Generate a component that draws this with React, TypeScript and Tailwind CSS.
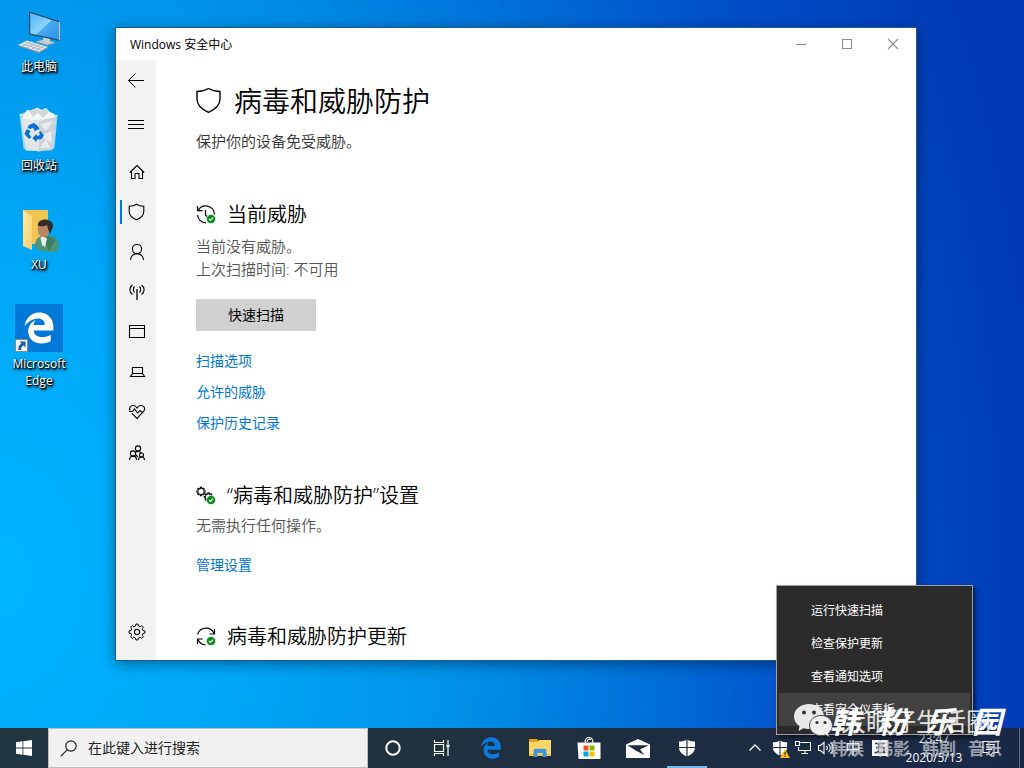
import React from 'react';

type IconProps = { className?: string };

const EDGE_PATH =
  'M26 228c42-61 117-121 220-125 0 0 110 0 100 105H170c6-37 19-59 34-79-75 35-122 96-121 188 1 72 50 145 121 172 84 32 193 8 240-21V363C364 420 174 424 172 296H486V244c0-44-8-85-29-123C416 48 344 8 259 8 119 8 41 113 26 228z';

function EdgeGlyph({ className }: IconProps) {
  return (
    <svg viewBox="0 0 512 512" className={className} fill="currentColor" aria-hidden="true">
      <path d={EDGE_PATH} />
    </svg>
  );
}

function Line({ className, size = 18, children }: { className?: string; size?: number; children: React.ReactNode }) {
  return (
    <svg
      width={size}
      height={size}
      viewBox={`0 0 ${size} ${size}`}
      className={className}
      fill="none"
      stroke="currentColor"
      strokeWidth="1.1"
      aria-hidden="true"
    >
      {children}
    </svg>
  );
}

function gearPath(cx: number, cy: number, outer: number, inner: number, teeth: number) {
  const pts: string[] = [];
  const step = (Math.PI * 2) / teeth;
  for (let i = 0; i < teeth; i++) {
    const a = i * step - Math.PI / 2;
    [
      [-0.3, inner],
      [-0.18, outer],
      [0.18, outer],
      [0.3, inner],
    ].forEach(([k, r]) => {
      pts.push(`${(cx + Math.cos(a + k * step) * r).toFixed(2)} ${(cy + Math.sin(a + k * step) * r).toFixed(2)}`);
    });
  }
  return `M${pts.join('L')}Z`;
}

const shieldPath = 'M8.5 1.2C10.500 2.6 13 3.200 15.800 3.200V8.500C15.800 12.300 12.800 15 8.500 16.800C4.200 15 1.200 12.300 1.200 8.500V3.200C4 3.200 6.500 2.600 8.500 1.200Z';

function PcIcon() {
  return (
    <svg width="48" height="48" viewBox="0 0 48 48" aria-hidden="true">
      <defs>
        <linearGradient id="pcScreen" x1="0" y1="0" x2="1" y2="1">
          <stop offset="0" stopColor="#4fb6f7" />
          <stop offset="0.5" stopColor="#8ed2fb" />
          <stop offset="0.52" stopColor="#49abf2" />
          <stop offset="1" stopColor="#2b92e6" />
        </linearGradient>
      </defs>
      <path d="M14 4.500 45 14.500V34L14 27.500Z" fill="#27465f" />
      <path d="M15.200 6 43.700 15.200V32.500L15.200 26.500Z" fill="url(#pcScreen)" />
      <path d="M43.700 15.200 45 14.500V34L43.700 32.500Z" fill="#b9c6cf" />
      <path d="M28 30.500 35 32V34L40 35.500 32 38 21 34.500 28 33Z" fill="#c5cdd3" />
      <path d="M21 34.500 32 38 40 35.500V36.500L32 39 21 35.500Z" fill="#87939c" />
      <path d="M12 33.500 33 40 24 45 3 38Z" fill="#e4e8eb" />
      <path d="M3 38 24 45 33 40V41L24 46.200 3 39Z" fill="#8b969e" />
      <path d="M9.500 35 30 41.500M6.500 36.500 27 43.300M16 35 7 39.500M20.500 36.300 11.500 41M25 37.700 16 42.500M29 39 20.500 43.800" stroke="#a3adb5" strokeWidth=".8" />
    </svg>
  );
}

function BinIcon() {
  return (
    <svg width="48" height="48" viewBox="0 0 48 48" aria-hidden="true">
      <path d="M4.500 8.500 13 5 34 6 42.500 9.500 39.500 42 36 44.500 11.500 45 8.500 42Z" fill="#bfe0f2" opacity=".85" />
      <path d="M8 10 12 4 18 5 22 1.500 27 4 31 2 35 6 39 8 40 14 8 14Z" fill="#f4f5f6" />
      <path d="M14 5 18 11 23 7 28 12 34 6 30 2 26 5 21 2Z" fill="#d3d8dc" />
      <path d="M6 12 11 43 24 45.500 37.500 42.500 41 12 24 15Z" fill="#e3e6e9" />
      <path d="M24 14 41 11 37.500 42.500 24 45.500Z" fill="#ccd2d7" />
      <path d="M25 18 38 15 31 25ZM26 30 36 25 37 37ZM25 42 31 33 35 42Z" fill="#e9ebed" />
      <path d="M4.500 8.500 24 14.500 42.500 9.500" fill="none" stroke="#e8f5fb" strokeWidth="1" />
      <g fill="#0a6fd0">
        <path d="M14 19 19 17 23 20 24.500 23 19.500 25 18 21.500 15.500 23 12.500 22Z" />
        <path d="M11.500 23 15.500 25 14 28 16.500 31 14 33 9.500 28Z" />
        <path d="M25.500 25 29 29.500 26.500 33 22 33.500 21 36 17.500 32 21.500 28 22 30 25 29 24 26Z" />
      </g>
    </svg>
  );
}

function UserFolderIcon() {
  return (
    <svg width="48" height="48" viewBox="0 0 48 48" aria-hidden="true">
      <defs>
        <linearGradient id="folderFront" x1="0" y1="0" x2="1" y2="1">
          <stop offset="0" stopColor="#ffe9a6" />
          <stop offset="1" stopColor="#f5cf6e" />
        </linearGradient>
      </defs>
      <path d="M8 5H33V39H16Z" fill="#f0c555" />
      <path d="M8 5 17 12V45L8 41Z" fill="url(#folderFront)" />
      <path d="M20 43C19.500 35 23 32 27 30.500L34 30C42 33 46 36 42.500 46 L42.500 46C35 48 25 46.500 20 43Z" fill="#4c9472" />
      <path d="M25.500 33 27 30 32 34 30 42 27 40Z" fill="#e4efe9" />
      <path d="M33 31 40 35 34 46 31 38Z" fill="#3c7d5f" />
      <ellipse cx="28.500" cy="24.500" rx="5.800" ry="7.800" fill="#b98662" />
      <path d="M23 21C22 16 27 14.500 31 14.500 37 15 39.500 20 37 24L35 29 33 24 32 20C29 22 26 21 23 21Z" fill="#352b27" />
    </svg>
  );
}

function EdgeTile() {
  return (
    <span className="relative flex size-12 items-center justify-center bg-[#0078d7]">
      <EdgeGlyph className="size-8 text-white" />
      <svg width="13" height="13" viewBox="0 0 13 13" className="absolute bottom-0 left-0" aria-hidden="true">
        <rect x=".5" y=".5" width="12" height="12" fill="#f4f4f4" stroke="#8a8a8a" />
        <path d="M4.500 2.500H10.500V8.500L8.500 6.500C6.500 7.500 5.800 9 6 11H3.500C2.800 8 4 6 6.500 4.500Z" fill="#1c5fa8" />
      </svg>
    </span>
  );
}

function DesktopItem({ label, children }: { label: string; children: React.ReactNode }) {
  return (
    <button className="flex h-[99px] w-full flex-col items-center gap-[3px] text-xs leading-[17px] text-white [text-shadow:1px_1px_1px_#000,1px_1px_2px_#000,1px_2px_3px_#000]">
      <span className="block size-12">{children}</span>
      <span className="max-w-16">{label}</span>
    </button>
  );
}

function OkBadge({ x, y }: { x: number; y: number }) {
  return (
    <g>
      <circle cx={x} cy={y} r="4.600" fill="#0d8a1c" stroke="#fff" strokeWidth=".6" />
      <path d={`M${x - 2} ${y}l1.500 1.500 2.600-2.800`} fill="none" stroke="#fff" strokeWidth="1.200" />
    </g>
  );
}

function Section({ icon, title, children }: { icon: React.ReactNode; title: string; children?: React.ReactNode }) {
  return (
    <section>
      <h2 className="flex h-[30px] items-center gap-[11px] text-xl font-[350]">
        {icon}
        {title}
      </h2>
      {children}
    </section>
  );
}

function TextLink({ children }: { children: React.ReactNode }) {
  return (
    <a href="#" className="flex h-[31px] w-fit items-center text-sm text-[#0078d7]">
      {children}
    </a>
  );
}

const navItems: { label: string; icon: React.ReactNode }[] = [
  { label: '主页', icon: <Line><path d="M1.800 9.500 9 2.500 16.200 9.500M3.500 8V15.500H7V10.500H11V15.500H14.500V8" /></Line> },
  { label: '病毒和威胁防护', icon: <Line><path d={shieldPath} /></Line> },
  { label: '帐户保护', icon: <Line><circle cx="9" cy="6" r="4.600" /><path d="M2.500 17C2.500 13 5.500 10.600 9 10.600S15.500 13 15.500 17" /></Line> },
  { label: '防火墙和网络保护', icon: <Line><path d="M9 6V17" strokeWidth="1.300" /><path d="M6.500 3.500C5 5 5 8 6.500 9.500M11.500 3.500C13 5 13 8 11.500 9.500M4.500 2C1 4.500 1 9 4.500 11.500M13.500 2C17 4.500 17 9 13.500 11.500" /></Line> },
  { label: '应用和浏览器控制', icon: <Line><path d="M1.500 2.500H16.500V14.500H1.500ZM1.500 5.500H16.500" /></Line> },
  { label: '设备安全性', icon: <Line><path d="M4.500 4.500H14.500V10.500H4.500ZM4.500 10.500 2.500 13.500H16.500L14.500 10.500" /></Line> },
  { label: '设备性能和运行状况', icon: <Line><path d="M2 7.500C.5 4.500 3 2.300 5.500 2.500 7 2.600 8 3.500 9 5 10 3.500 11 2.600 12.500 2.500 15.500 2.300 17.800 4.800 16 7.800L9 15.500 4 10.300M1 8.500H4.500L6.500 6 9.500 10 11.800 7.500 13.500 9H14.500" /></Line> },
  { label: '家庭选项', icon: <Line><circle cx="10" cy="5.500" r="2.600" /><circle cx="5" cy="10.500" r="2.600" /><circle cx="13.500" cy="12" r="2" /><path d="M1.500 17C1.500 14.500 3 13.100 5 13.100S8.500 14.500 8.500 17M10.500 17C10.500 15 12 14 13.500 14S16.500 15 16.500 17M7.500 9.500C8.500 8 12 8 13.500 10M7.500 11.500 10 14" /></Line> },
];

const menuItems = ['运行快速扫描', '检查保护更新', '查看通知选项', '查看安全仪表板'];

function SecurityWindow() {
  return (
    <main className="absolute top-7 right-[108px] bottom-[68px] left-[116px] flex flex-col bg-white shadow-[0_3px_14px_rgba(0,0,0,0.45)] outline-1 outline-[#1b5a96]">
      <header className="flex h-8 shrink-0 items-center justify-between pl-[14px]">
        <span className="pt-0.5 text-xs">Windows 安全中心</span>
        <div className="flex text-[#8a8a8a]">
          <button aria-label="最小化" className="flex h-8 w-[46px] items-center justify-center">
            <Line size={12}><path d="M1 6.500H11" /></Line>
          </button>
          <button aria-label="最大化" className="flex h-8 w-[46px] items-center justify-center">
            <Line size={12}><path d="M1.500 1.500H10.500V10.500H1.500Z" /></Line>
          </button>
          <button aria-label="关闭" className="flex h-8 w-[46px] items-center justify-center">
            <Line size={12}><path d="M1 1 11 11M11 1 1 11" /></Line>
          </button>
        </div>
      </header>
      <div className="flex min-h-0 flex-1">
        <nav className="flex w-10 shrink-0 flex-col bg-[#f2f2f2]">
          <button aria-label="返回" className="flex h-10 items-center justify-center">
            <Line><path d="M17 9.500H1.500M8.500 2.500 1.500 9.500 8.500 16.500" strokeWidth="1" /></Line>
          </button>
          <button aria-label="打开导航" className="mt-[5px] flex h-10 items-center justify-center">
            <Line><path d="M1 4.500H17M1 8.500H17M1 12.500H17" /></Line>
          </button>
          <div className="mt-[7px] flex flex-col">
            {navItems.map((item, i) => (
              <button key={item.label} aria-label={item.label} className="flex h-10 items-center pl-1">
                <span className={i === 1 ? 'h-6 w-0.5 bg-[#0078d7]' : 'h-6 w-0.5'} />
                <span className="ml-1.5">{item.icon}</span>
              </button>
            ))}
          </div>
          <button aria-label="设置" className="mt-auto mb-2 flex h-10 items-center pl-3">
            <Line><path d={gearPath(9, 9, 8, 6.2, 8)} strokeWidth="1" /><circle cx="9" cy="9" r="2.600" /></Line>
          </button>
        </nav>
        <div className="min-w-0 flex-1 overflow-hidden pt-[21px] pl-10">
          <h1 className="flex h-10 items-center gap-[13px] text-[28px] font-[350]">
            <svg width="25" height="28" viewBox="0 0 25 28" fill="none" stroke="currentColor" strokeWidth="1.400" aria-hidden="true">
              <path d="M12.500 1.500C16 3.600 19.500 4.500 24 4.500V12C24 18.500 19 22.500 12.500 25.300C6 22.500 1 18.500 1 12V4.500C5.500 4.500 9 3.600 12.500 1.500Z" />
            </svg>
            病毒和威胁防护
          </h1>
          <p className="mt-2 text-[15px] leading-6 font-[350] text-[#333]">保护你的设备免受威胁。</p>

          <div className="mt-[47px]">
            <Section
              title="当前威胁"
              icon={
                <Line size={20}>
                  <path d="M2 5.500C4 2 8 .500 11.500 1.100 16 2 18.500 5.500 18.300 9.500M1.500 1V5.700H6.500M1.500 10C2 14.500 5.500 17.500 10 17.800" strokeWidth="1.200" />
                  <path d="M9.500 5V10L12 12.500" strokeWidth="1.200" />
                  <OkBadge x={15} y={14} />
                </Line>
              }
            >
              <p className="mt-[5px] text-[15px] leading-[23px] font-[350] text-[#555]">
                当前没有威胁。
                <br />
                上次扫描时间: 不可用
              </p>
              <button className="mt-[18px] h-8 w-[120px] bg-[#d1d1d1] text-sm">快速扫描</button>
              <div className="mt-[14px]">
                <TextLink>扫描选项</TextLink>
                <TextLink>允许的威胁</TextLink>
                <TextLink>保护历史记录</TextLink>
              </div>
            </Section>
          </div>

          <div className="mt-[43px]">
            <Section
              title="“病毒和威胁防护”设置"
              icon={
                <Line size={20}>
                  <path d={gearPath(5, 5.5, 4.2, 3, 8)} />
                  <path d={gearPath(12.5, 11, 4.2, 3, 8)} />
                  <OkBadge x={15} y={14} />
                </Line>
              }
            >
              <p className="mt-[3px] text-[15px] leading-[23px] font-[350] text-[#555]">无需执行任何操作。</p>
              <div className="mt-3">
                <TextLink>管理设置</TextLink>
              </div>
            </Section>
          </div>

          <div className="mt-[42px]">
            <Section
              title="病毒和威胁防护更新"
              icon={
                <Line size={20}>
                  <path d="M1.500 7.500C3 3 6.500 1.100 10 1.100 13.500 1.100 16.500 3 18 6.500M18.500 2V7H13.500M9.500 17.800C6 17.800 3.500 16 2 12.500M1.500 17V12H6.500" strokeWidth="1.200" />
                  <OkBadge x={15} y={14} />
                </Line>
              }
            />
          </div>
        </div>
      </div>
    </main>
  );
}

function TaskButton({ label, active, children }: { label: string; active?: boolean; children: React.ReactNode }) {
  return (
    <button aria-label={label} className="flex h-10 w-[49px] flex-col items-center">
      <span className="flex flex-1 items-center">{children}</span>
      <span className={active ? '-mt-0.5 h-0.5 w-10 bg-[#76b9ed]' : 'hidden'} />
    </button>
  );
}

function WinShield({ size }: { size: number }) {
  return (
    <svg width={size} height={size} viewBox="0 0 18 18" aria-hidden="true">
      <path d="M9 .5C11.500 2 14 2.600 17 2.600V8.500C17 12.800 13.500 15.800 9 17.500 4.500 15.800 1 12.800 1 8.500V2.600C4 2.600 6.500 2 9 .5Z" fill="#fff" />
      <path d="M9 0V18M1 8.500H17" stroke="#1f2e3d" strokeWidth="1.200" />
    </svg>
  );
}

function Taskbar() {
  return (
    <footer className="flex h-10 shrink-0 items-stretch bg-linear-to-r from-[#213640] via-[#1f2f3f] to-[#1a2848] text-white">
      <button aria-label="开始" className="flex w-12 items-center justify-center">
        <svg width="16" height="16" viewBox="0 0 16 16" fill="#fff" aria-hidden="true">
          <path d="M0 2.200 6.500 1.300V7.600H0ZM7.300 1.200 16 0V7.600H7.300ZM0 8.400H6.500V14.700L0 13.800ZM7.300 8.400H16V16L7.300 14.800Z" />
        </svg>
      </button>
      <label className="flex w-80 items-center gap-[11px] border border-[#bdbdbd] bg-[#f1f1f1] pl-[11px] text-[#222]">
        <svg width="17" height="17" viewBox="0 0 17 17" fill="none" stroke="currentColor" strokeWidth="1.200" aria-hidden="true">
          <circle cx="11" cy="6" r="5.200" />
          <path d="M7.200 9.800.6 16.400" />
        </svg>
        <input aria-label="搜索" placeholder="在此键入进行搜索" className="min-w-0 flex-1 bg-transparent text-sm outline-none placeholder:text-[#222]" />
      </label>
      <TaskButton label="Cortana">
        <svg width="16" height="16" viewBox="0 0 16 16" aria-hidden="true"><circle cx="8" cy="8" r="6.700" fill="none" stroke="#fff" strokeWidth="2" /></svg>
      </TaskButton>
      <TaskButton label="任务视图">
        <svg width="18" height="16" viewBox="0 0 18 16" fill="none" stroke="#fff" strokeWidth="1.200" aria-hidden="true">
          <path d="M1.500 4.500H10.500V11.500H1.500ZM1.500 0V2.500H10.500V0M1.500 16V13.500H10.500V16M15 0V4M15 8V16" />
          <path d="M13.500 4.500H16.500V7.500H13.500Z" fill="#fff" stroke="none" />
        </svg>
      </TaskButton>
      <TaskButton label="Microsoft Edge">
        <EdgeGlyph className="size-[22px] text-[#0a7ade]" />
      </TaskButton>
      <TaskButton label="文件资源管理器">
        <svg width="22" height="18" viewBox="0 0 22 18" aria-hidden="true">
          <path d="M0 0H8L10 2V5H0Z" fill="#e3a31b" />
          <path d="M0 3H8.500L10.500 1H22V17H0Z" fill="#fcd667" />
          <path d="M0 15H22V17H0Z" fill="#f4c13e" />
          <path d="M4.500 18V12C4.500 10.500 5.500 9.800 6.500 9.800H15.500C17 9.800 17.500 10.500 17.500 12V18H13.500V14H8.500V18Z" fill="#3f97dd" />
        </svg>
      </TaskButton>
      <TaskButton label="Microsoft Store">
        <svg width="24" height="24" viewBox="0 0 24 24" aria-hidden="true">
          <path d="M8 7C8 3 9.500 1.500 12 1.500S16 3 16 7M10 6C10 3.500 12 2.500 14 3.500" fill="none" stroke="#fff" strokeWidth="1.100" />
          <path d="M.5 6.500H23.500V23H1.500Z" fill="#fff" />
          <path d="M6.500 9.500H11.500V14.500H6.500Z" fill="#f25022" />
          <path d="M12.500 9.500H17.500V14.500H12.500Z" fill="#7fba00" />
          <path d="M6.500 15.500H11.500V20.500H6.500Z" fill="#00a4ef" />
          <path d="M12.500 15.500H17.500V20.500H12.500Z" fill="#ffb900" />
        </svg>
      </TaskButton>
      <TaskButton label="邮件">
        <svg width="24" height="19" viewBox="0 0 24 19" aria-hidden="true">
          <path d="M0 5.500 12 0 24 5.500V19H0Z" fill="#fff" />
          <path d="M1.500 6.200H22.500L14 10.500 18.500 16 10.500 12Z" fill="#1f2e3d" />
        </svg>
      </TaskButton>
      <TaskButton label="Windows 安全中心" active>
        <WinShield size={18} />
      </TaskButton>
      <div className="ml-auto flex items-center text-xs">
        <button aria-label="显示隐藏的图标" className="mr-[7px] flex w-5 justify-center">
          <Line size={12}><path d="M.5 8.500 6 3 11.500 8.500" stroke="#fff" strokeWidth="1.300" /></Line>
        </button>
        <button aria-label="安全警告" className="relative mr-[7px]">
          <WinShield size={16} />
          <svg width="10" height="9" viewBox="0 0 10 9" className="absolute -right-0.5 -bottom-0.5" aria-hidden="true">
            <path d="M5 0 10 9H0Z" fill="#fdb813" />
            <path d="M5 3V6M5 7V8" stroke="#222" />
          </svg>
        </button>
        <button aria-label="网络" className="mr-[7px]">
          <svg width="16" height="14" viewBox="0 0 16 14" fill="none" stroke="#fff" strokeWidth="1.100" aria-hidden="true">
            <path d="M5.500 1.500H15.500V9.500H3.500V6M10 9.500V13M6.500 12.500H13M.5.5H4.500V4.500H.5Z" />
          </svg>
        </button>
        <button aria-label="音量" className="mr-[11px]">
          <svg width="16" height="14" viewBox="0 0 16 14" fill="none" stroke="#fff" strokeWidth="1.100" aria-hidden="true">
            <path d="M.5 4.500H2.500L6 1.500V12.500L2.500 9.500H.5ZM8.500 5C9.500 6 9.500 8 8.500 9M10.500 3C12.800 5 12.800 9 10.500 11M12.500 1.500C16 4 16 10 12.500 12.500" />
          </svg>
        </button>
        <button className="mr-[11px] w-4 text-base leading-4">中</button>
        <button aria-label="微软拼音" className="mr-4">
          <svg width="16" height="16" viewBox="0 0 16 16" aria-hidden="true">
            <path d="M0 0H16V16H0Z" fill="#fff" />
            <path d="M3 3.500H13M4 7.500H12V12.500M7 3.500 6 12.500M2.500 12.500H13.500" fill="none" stroke="#1b2a3a" strokeWidth="1.400" />
          </svg>
        </button>
        <time className="mr-[18px] flex w-[60px] flex-col items-center leading-[19px]">
          <span>23:47</span>
          <span>2020/5/13</span>
        </time>
        <button aria-label="通知" className="mr-5">
          <Line size={17}><path d="M1 1.500H16V12.500H11L8.500 15.500 6 12.500H1ZM4 4.500H13M4 7H13M4 9.500H10" stroke="#fff" /></Line>
        </button>
        <button aria-label="显示桌面" className="h-10 w-[5px] border-l border-[#66717f]" />
      </div>
    </footer>
  );
}

function ContextMenu() {
  return (
    <ul role="menu" className="absolute right-[51px] bottom-[33px] w-[197px] border border-[#a0a0a0] bg-[#2b2b2b] px-0.5 py-2 text-xs text-white shadow-[3px_3px_4px_rgba(0,0,0,0.5)]">
      {menuItems.map((item, i) => (
        <li key={item} role="none">
          <button role="menuitem" className={i === 3 ? 'h-[33px] w-full bg-[#414141] pl-8 text-left' : 'h-[33px] w-full pl-8 text-left'}>
            {item}
          </button>
        </li>
      ))}
    </ul>
  );
}

function Watermark() {
  return (
    <>
      <div className="pointer-events-none absolute right-[33px] bottom-[30px] flex items-center gap-2 whitespace-nowrap text-white/85">
        <svg width="39" height="34" viewBox="0 0 39 34" aria-hidden="true">
          <path d="M15 0C23 0 30 5 30 12.500S23 25 15 25C13 25 11 24.700 9.500 24.200L4.500 27 5.500 22C2 19.800 0 16.500 0 12.500 0 5 7 0 15 0Z" fill="#e8e8e8" />
          <circle cx="10" cy="8.500" r="2" fill="#333" />
          <circle cx="20" cy="8.500" r="2" fill="#333" />
          <path d="M27 11.500C33.500 11.500 38.500 16 38.500 21.500 38.500 24.500 37 27 34.500 29L35.500 33 31.500 31C30 31.400 28.500 31.600 27 31.600 20.500 31.600 15.500 27 15.500 21.500S20.500 11.500 27 11.500Z" fill="#f0f0f0" stroke="#444" />
          <circle cx="23" cy="18.500" r="1.600" fill="#333" />
          <circle cx="31" cy="18.500" r="1.600" fill="#333" />
        </svg>
        <span className="text-[25px] leading-8">大眼仔生活圈</span>
      </div>
      <div className="pointer-events-none absolute right-[22px] bottom-[10px] flex w-[172px] flex-col whitespace-nowrap">
        <div className="flex justify-between text-[30px] leading-9 font-bold text-white italic">
          <span>韩</span>
          <span>粉</span>
          <span>乐</span>
          <span>园</span>
        </div>
        <div className="flex justify-between text-[17px] leading-[18px] font-bold text-[#c4c8cc]/75">
          <span>韩娱</span>
          <span>韩影</span>
          <span>韩剧</span>
          <span>音乐</span>
        </div>
      </div>
    </>
  );
}

export default function App() {
  return (
    <div className="relative flex min-h-screen flex-col overflow-hidden bg-[radial-gradient(ellipse_108%_200%_at_0%_75%,#00b4ff_0%,#00a8f8_20%,#0094ea_40%,#0074da_57%,#0050c8_74%,#003ab4_95%)] font-['Open_Sans','Noto_Sans_CJK_SC',sans-serif] text-black">
      <div className="relative flex min-h-[660px] flex-1 flex-col">
        <aside className="flex w-[78px] flex-col pt-[7px]">
          <DesktopItem label="此电脑"><PcIcon /></DesktopItem>
          <DesktopItem label="回收站"><BinIcon /></DesktopItem>
          <DesktopItem label="XU"><UserFolderIcon /></DesktopItem>
          <DesktopItem label="Microsoft Edge"><EdgeTile /></DesktopItem>
        </aside>
        <SecurityWindow />
      </div>
      <Taskbar />
      <ContextMenu />
      <Watermark />
    </div>
  );
}
